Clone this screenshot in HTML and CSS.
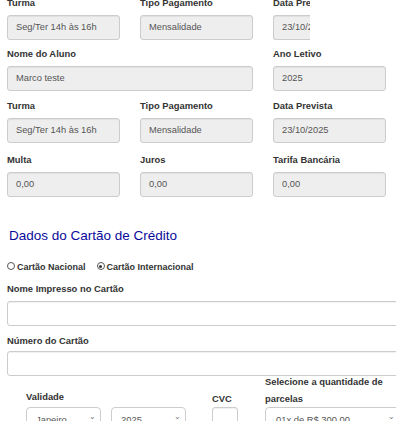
FILE: index.html
```html
<!DOCTYPE html>
<html lang="pt-BR">
<head>
<meta charset="utf-8">
<title>Pagamento</title>
<link rel="stylesheet" href="styles.css">
</head>
<body>
<div class="page">
  <div class="row row-first">
    <div class="field"><label class="lbl">Turma</label><div class="inp ro">Seg/Ter 14h às 16h</div></div>
    <div class="field"><label class="lbl">Tipo Pagamento</label><div class="inp ro">Mensalidade</div></div>
    <div class="field clip"><label class="lbl">Data Prevista</label><div class="inp ro">23/10/2025</div></div>
  </div>
  <div class="row row-2">
    <div class="field span2"><label class="lbl">Nome do Aluno</label><div class="inp ro">Marco teste</div></div>
    <div class="field"><label class="lbl">Ano Letivo</label><div class="inp ro">2025</div></div>
  </div>
  <div class="row row-3">
    <div class="field"><label class="lbl">Turma</label><div class="inp ro">Seg/Ter 14h às 16h</div></div>
    <div class="field"><label class="lbl">Tipo Pagamento</label><div class="inp ro">Mensalidade</div></div>
    <div class="field"><label class="lbl">Data Prevista</label><div class="inp ro">23/10/2025</div></div>
  </div>
  <div class="row row-4">
    <div class="field"><label class="lbl">Multa</label><div class="inp ro">0,00</div></div>
    <div class="field"><label class="lbl">Juros</label><div class="inp ro">0,00</div></div>
    <div class="field"><label class="lbl">Tarifa Bancária</label><div class="inp ro">0,00</div></div>
  </div>

  <h4 class="section-title">Dados do Cartão de Crédito</h4>

  <div class="radios">
    <label class="radio"><span class="dot"></span>Cartão Nacional</label>
    <label class="radio"><span class="dot on"></span>Cartão Internacional</label>
  </div>

  <div class="wide-field wf-1">
    <label class="lbl">Nome Impresso no Cartão</label>
    <div class="inp wide"></div>
  </div>
  <div class="wide-field wf-2">
    <label class="lbl">Número do Cartão</label>
    <div class="inp wide"></div>
  </div>

  <div class="bottom">
    <div class="val">
      <label class="lbl lb-val">Validade</label>
      <div class="selects">
        <div class="sel m">Janeiro<span class="chev">⌄</span></div>
        <div class="sel m">2025<span class="chev">⌄</span></div>
      </div>
    </div>
    <div class="cvc">
      <label class="lbl lb-cvc">CVC</label>
      <div class="inp cvc-inp"></div>
    </div>
    <div class="parc">
      <label class="lbl two">Selecione a quantidade de parcelas</label>
      <div class="sel p">01x de R$ 300,00<span class="chev">⌄</span></div>
    </div>
  </div>
</div>
</body>
</html>
```

FILE: styles.css
```css
html, body {
  margin: 0;
  padding: 0;
  background: #fff;
  overflow: hidden;
}
body {
  font-family: "Liberation Sans", Arial, sans-serif;
  color: #333;
}
.page {
  padding-left: 7px;
  width: 600px;
}
.row {
  display: grid;
  grid-template-columns: 113px 113px 113px;
  column-gap: 20px;
}
.row-first {
  margin-top: -5px;
}
.row-2 {
  margin-top: 6px;
}
.row-3 {
  margin-top: 7px;
}
.row-4 {
  margin-top: 9px;
}
.field {
  display: flex;
  flex-direction: column;
}
.span2 {
  grid-column: span 2;
}
.clip {
  width: 37px;
  overflow: hidden;
  white-space: nowrap;
}
.clip .inp {
  width: 113px;
  border-right: none;
}
.lbl {
  display: block;
  font-weight: bold;
  font-size: 9.4px;
  line-height: 15px;
  margin-bottom: 5px;
  color: #333;
  white-space: nowrap;
}
.inp {
  box-sizing: border-box;
  height: 25px;
  border: 1px solid #ccc;
  border-radius: 3px;
  padding: 0 8px;
  font-size: 9.3px;
  line-height: 23px;
  color: #555;
  background: #fff;
  box-shadow: inset 0 1px 1px rgba(0,0,0,0.06);
  white-space: nowrap;
}
.inp.ro {
  background: #eee;
}
.section-title {
  margin: 31px 0 0 2px;
  font-weight: normal;
  font-size: 13.5px;
  line-height: 16px;
  color: #0a0a9a;
}
.radios {
  display: flex;
  gap: 11px;
  margin-top: 17px;
  font-size: 9px;
  font-weight: bold;
  line-height: 12px;
}
.radio {
  display: flex;
  align-items: center;
}
.dot {
  box-sizing: border-box;
  width: 8px;
  height: 8px;
  border: 0.8px solid #555;
  border-radius: 50%;
  margin-right: 2px;
  position: relative;
  top: -1px;
}
.dot.on::after {
  content: "";
  position: absolute;
  left: 1.7px;
  top: 1.7px;
  width: 3px;
  height: 3px;
  border-radius: 50%;
  background: #333;
}
.wf-1 {
  margin-top: 8px;
}
.wf-1 .lbl {
  margin-bottom: 5px;
}
.wf-2 {
  margin-top: 7px;
}
.wf-2 .lbl {
  margin-bottom: 3px;
}
.inp.wide {
  width: 420px;
}
.bottom {
  display: flex;
  align-items: flex-end;
  margin-top: -3px;
}
.val {
  margin-left: 19px;
  width: 160px;
}
.lb-val {
  margin-bottom: 3px;
}
.lb-cvc {
  margin-bottom: 1px;
}
.selects {
  display: flex;
  gap: 10px;
}
.sel {
  box-sizing: border-box;
  height: 25px;
  border: 1px solid #ccc;
  border-radius: 4px;
  background: #fff;
  font-size: 9.4px;
  line-height: 23px;
  color: #555;
  padding-left: 9px;
  position: relative;
  white-space: nowrap;
}
.sel.m {
  width: 75px;
}
.sel.p {
  width: 140px;
  padding-left: 10px;
}
.chev {
  position: absolute;
  right: 4px;
  top: -3px;
  font-size: 8px;
  color: #777;
}
.sel.p .chev {
  right: 9px;
}
.cvc {
  margin-left: 26px;
  width: 26px;
}
.cvc-inp {
  width: 26px;
}
.parc {
  margin-left: 27px;
  width: 140px;
}
.lbl.two {
  white-space: normal;
  line-height: 17px;
  margin-bottom: 0;
}
```
